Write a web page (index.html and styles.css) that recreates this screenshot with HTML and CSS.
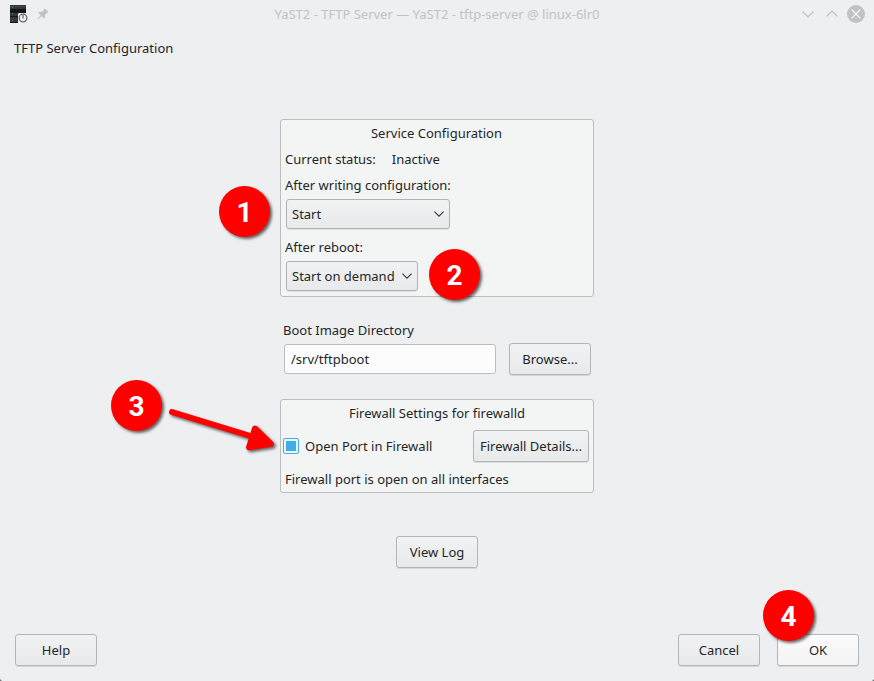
FILE: index.html
```html
<!DOCTYPE html>
<html lang="en">
<head>
<meta charset="utf-8">
<title>YaST2 - TFTP Server</title>
<link rel="stylesheet" href="styles.css">
</head>
<body>
<div class="window">
  <header class="titlebar">
    <div class="title-left">
      <svg class="app-icon" width="18" height="19" viewBox="0 0 18 19">
        <path fill="#31363b" d="M0 0h16v18H0z"/>
        <path fill="#14181b" d="M0 4h16v4H0zM0 11h16v1H0zM0 17h16v1H0z"/>
        <path fill="#43484c" d="M0 1h16v1H0z"/>
        <path fill="#3c9c35" d="M2 2h1v1H2zM2 8h1v1H2zM2 15h1v1H2z"/>
        <path fill="#eeeff1" d="M9 8h9v11H8V9z"/>
        <circle cx="13" cy="13" r="3.8" fill="none" stroke="#666a6d" stroke-width="1.3"/>
        <path d="M13 10v3.5" stroke="#666a6d" stroke-width="1.3"/>
      </svg>
      <svg width="12" height="12" viewBox="0 0 12 12">
        <path fill="#bdc3c7" d="M7.500 0 11.500 4 10.300 4.800 8.200 6.700 8 9.500 7 10.400 4.600 8 .8 11.600.2 11 3.700 7.200 1.300 4.700 2.200 3.800 5 3.700 7 1.600z"/>
      </svg>
    </div>
    <div class="title-text">YaST2 - TFTP Server — YaST2 - tftp-server @ linux-6lr0</div>
    <div class="title-controls">
      <svg width="12" height="18" viewBox="0 0 12 18"><path d="m.5 6.500 5.500 5.500 5.500-5.500" fill="none" stroke="#bdc3c7" stroke-width="1.2"/></svg>
      <svg width="12" height="18" viewBox="0 0 12 18"><path d="m.5 11.500 5.500-5.500 5.500 5.500" fill="none" stroke="#bdc3c7" stroke-width="1.2"/></svg>
      <svg width="18" height="18" viewBox="0 0 18 18"><circle cx="9" cy="9" r="9" fill="#bdc3c7"/><path d="m4.700 4.700 8.600 8.600m0-8.600-8.600 8.600" stroke="#fcfcfc" stroke-width="1.2"/></svg>
    </div>
  </header>
  <h1 class="heading">TFTP Server Configuration</h1>
  <main class="content">
    <section class="group service">
      <h2>Service Configuration</h2>
      <div class="status"><span>Current status:</span><span>Inactive</span></div>
      <div class="label">After writing configuration:</div>
      <div class="combo combo-start"><span>Start</span><svg width="10" height="6" viewBox="0 0 10 6"><path d="m.4.6 4.600 4.600L9.600.6" fill="none" stroke="#31363b" stroke-width="1.1"/></svg></div>
      <div class="label">After reboot:</div>
      <div class="combo combo-demand"><span>Start on demand</span><svg width="10" height="6" viewBox="0 0 10 6"><path d="m.4.6 4.600 4.600L9.600.6" fill="none" stroke="#31363b" stroke-width="1.1"/></svg></div>
    </section>
    <section class="directory">
      <label for="dir">Boot Image Directory</label>
      <div class="directory-row">
        <input id="dir" type="text" value="/srv/tftpboot">
        <button class="button">Browse...</button>
      </div>
    </section>
    <section class="group firewall">
      <h2>Firewall Settings for firewalld</h2>
      <div class="firewall-row">
        <span class="checkbox"></span>
        <span class="check-label">Open Port in Firewall</span>
        <button class="button details">Firewall Details...</button>
      </div>
      <div class="firewall-note">Firewall port is open on all interfaces</div>
    </section>
    <button class="button log">View Log</button>
  </main>
  <footer class="footer">
    <button class="button">Help</button>
    <div class="footer-right">
      <button class="button">Cancel</button>
      <button class="button primary">OK</button>
    </div>
  </footer>
  <span class="corner bottom-left"></span>
  <span class="corner bottom-right"></span>
  <div class="badge one">1</div>
  <div class="badge two">2</div>
  <div class="badge three">3</div>
  <div class="badge four">4</div>
  <svg class="arrow" width="120" height="60" viewBox="0 0 120 60">
    <path d="M12 12 97 38" stroke="#f00" stroke-width="6" stroke-linecap="round"/>
    <path d="M95 28.500 110.800 43.800 89 47.300z" fill="#f00" stroke="#f00" stroke-width="6" stroke-linejoin="round"/>
  </svg>
</div>
</body>
</html>
```
FILE: styles.css
```css
* { box-sizing: border-box; }
body {
  margin: 0;
  background: #31363b;
  color: #232629;
  font: 13px/18px "Noto Sans", sans-serif;
}
h1, h2 { margin: 0; font: inherit; }
.window {
  position: relative;
  display: flex;
  flex-direction: column;
  width: 874px;
  height: 681px;
  overflow: hidden;
  background: #eeeff1;
}
.titlebar {
  display: grid;
  grid-template-columns: 1fr auto 1fr;
  height: 28px;
  padding: 5px 9px 0 9px;
  color: #bdc3c7;
}
.title-left { display: flex; gap: 9px; padding-left: 1px; }
.title-left svg + svg { margin-top: 3px; }
.title-text { white-space: nowrap; }
.title-controls { display: flex; justify-content: flex-end; gap: 12px; }
.title-controls svg:last-child { margin-left: -3px; }
.heading { padding: 11px 14px 0; height: 91px; }
.content { display: flex; flex-direction: column; width: 314px; margin-left: 280px; }
.group { border: 1px solid #bbbdbf; border-radius: 3px; background: #f3f5f4; }
.group h2 { text-align: center; }
.service { height: 178px; padding: 4px 4px 0; }
.service h2 { margin-right: 1px; }
.status { display: flex; gap: 16px; margin: 8px 0; }
.combo {
  display: flex;
  align-items: center;
  justify-content: space-between;
  height: 30px;
  padding: 0 5px;
  border: 1px solid #afb1b3;
  border-radius: 3px;
  background: linear-gradient(#f1f2f3, #e8e9ea);
  box-shadow: 0 1px 0 rgba(0, 0, 0, .08);
}
.combo-start { width: 164px; margin: 5px 0 9px 1px; }
.combo-demand { width: 132px; margin: 5px 0 0 1px; }
.directory { padding: 24px 3px 23px 4px; height: 102px; }
.directory label { display: block; margin-left: -1px; }
.directory-row { display: flex; justify-content: space-between; align-items: center; margin-top: 4px; }
.directory input {
  width: 212px;
  height: 30px;
  padding: 0 6px;
  border: 1px solid #bbbdbf;
  border-radius: 3px;
  background: #fcfcfc;
  color: inherit;
  font: inherit;
}
.button {
  width: 82px;
  height: 32px;
  padding: 0;
  border: 1px solid #b3b5b7;
  border-radius: 3px;
  background: linear-gradient(#f1f2f3, #e8e9ea);
  box-shadow: 0 1px 0 rgba(0, 0, 0, .1);
  color: inherit;
  font: inherit;
}
.firewall { height: 94px; padding: 4px 4px 0; }
.firewall-row { display: flex; align-items: center; margin: 8px 0 8px -2px; }
.checkbox {
  width: 16px;
  height: 16px;
  padding: 2px;
  border: 1px solid #3daee9;
  border-radius: 2px;
  background: #3daee9 content-box;
}
.check-label { margin-left: 6px; }
.details { width: 116px; margin-left: auto; }
.log { margin: 43px auto 0 116px; }
.footer { display: flex; justify-content: space-between; margin: auto 15px 15px 15px; }
.footer-right { display: flex; gap: 17px; }
.primary { background: linear-gradient(#fcfcfc, #f3f3f4); }
.corner { position: absolute; bottom: 0; width: 2px; height: 2px; background: #777b7f; }
.bottom-left { left: 0; clip-path: polygon(0 0, 100% 100%, 0 100%); }
.bottom-right { right: 0; clip-path: polygon(100% 0, 100% 100%, 0 100%); }
.badge {
  position: absolute;
  width: 51px;
  height: 51px;
  border-radius: 50%;
  background: #f00;
  box-shadow: 2px 2px 3px rgba(0, 0, 0, .6);
  color: #fff;
  font: bold 28px/54px Roboto, sans-serif;
  text-align: center;
}
.one { left: 219px; top: 186px; }
.two { left: 429px; top: 249px; }
.three { left: 111px; top: 380px; }
.four { left: 763px; top: 590px; }
.arrow { position: absolute; left: 160px; top: 400px; filter: drop-shadow(2px 2px 1.5px rgba(0, 0, 0, .6)); }
```
